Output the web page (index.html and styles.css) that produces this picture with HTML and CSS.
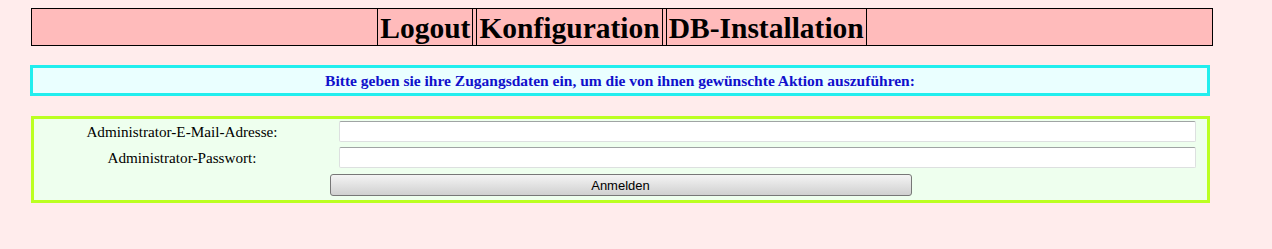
FILE: index.html
```html
<html>
<head>
    <meta charset="UTF-8">
    <title>Anmeldung</title>
    <link rel="stylesheet" href="styles.css">
</head>
<body>
<div class="menu">
    <div class="filler"></div>
    <div class="menu-items">
        <a class="menu-item" href="#">Logout</a>
        <a class="menu-item" href="#">Konfiguration</a>
        <a class="menu-item" href="#">DB-Installation</a>
    </div>
    <div class="filler"></div>
</div>

<div class="notice">
    Bitte geben sie ihre Zugangsdaten ein, um die von ihnen gewünschte Aktion auszuführen:
</div>

<form class="login">
    <label for="email">Administrator-E-Mail-Adresse:</label>
    <input type="text" id="email" name="email">
    <label for="pass">Administrator-Passwort:</label>
    <input type="password" id="pass" name="pass">
    <div class="button-row">
        <button type="button">Anmelden</button>
    </div>
</form>
</body>
</html>
```

FILE: styles.css
```css
body {
    margin: 8px;
    background-color: #ffecec;
    font-family: "Liberation Serif", serif;
}

.menu {
    display: flex;
    width: 1180px;
    margin-left: 23px;
    border: 1px solid #000;
    background-color: #ffbbbb;
    height: 36px;
}

.filler {
    flex: 1;
}

.menu-items {
    display: flex;
    gap: 3px;
}

.menu-item {
    border-left: 1px solid #000;
    border-right: 1px solid #000;
    padding: 0 2px;
    font-size: 29.5px;
    font-weight: bold;
    line-height: 38px;
    color: #000;
    text-decoration: none;
}

.notice {
    width: 1174px;
    margin: 19px 0 0 22px;
    border: 3px solid #22eeee;
    background-color: #eaffff;
    color: #1010cc;
    font-size: 15.5px;
    font-weight: bold;
    text-align: center;
    line-height: 25px;
}

.login {
    display: grid;
    grid-template-columns: 296px 1fr;
    align-items: center;
    row-gap: 5px;
    width: 1173px;
    margin: 20px 0 0 23px;
    padding: 2px 0 4px 0;
    border: 3px solid #bbff22;
    background-color: #eeffee;
    font-size: 15.2px;
}

.login label {
    text-align: center;
}

.login input {
    height: 21px;
    box-sizing: border-box;
    margin: 0 11px 0 9px;
    border: 1px solid #dde0e0;
    border-top-color: #a0a4a4;
    border-radius: 2px;
    background: #fff;
}

.button-row {
    grid-column: 1 / 3;
    display: flex;
    justify-content: center;
    margin-top: 1px;
}

.button-row button {
    width: 582px;
    height: 22px;
    border: 1px solid #777;
    border-radius: 3px;
    background: linear-gradient(#f4f4f4, #d0d0d0);
    font-family: "Liberation Sans", Arial, sans-serif;
    font-size: 13px;
    color: #000;
}
```
